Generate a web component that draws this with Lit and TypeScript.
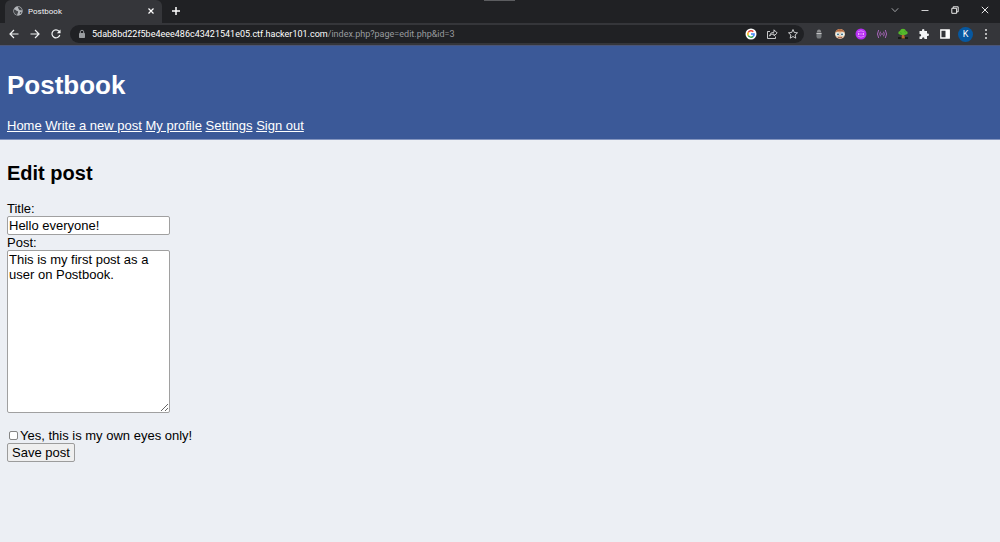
import { LitElement, html, css, svg } from 'lit';
import { customElement } from 'lit/decorators.js';

@customElement('browser-tabs')
class BrowserTabs extends LitElement {
  static styles = css`
    :host { display: block; background: #202124; }
    .strip { display: flex; height: 23px; position: relative; align-items: stretch; }
    .tab { display: flex; align-items: center; width: 157px; box-sizing: border-box; margin-left: 5px; padding: 0 7px 1px 8px; gap: 5px; background: #35363a; border-radius: 6px 6px 0 0; color: #f1f3f4; font: 8px Roboto, "Noto Sans", sans-serif; }
    .title { flex: 1; }
    button { border: 0; padding: 0; background: none; color: #fff; display: flex; align-items: center; justify-content: center; }
    .add { width: 28px; height: 22px; }
    .grip { position: absolute; left: 484px; top: 0; width: 31px; height: 1px; background: #5c5d60; }
    .windows { margin-left: auto; display: flex; }
    .windows button { width: 30px; height: 19px; }
    svg { display: block; fill: none; stroke: currentColor; }
  `;
  render() {
    return html`<div class="strip">
      <div class="tab">
        <svg width="10" height="10" viewBox="0 0 10 10"><circle cx="5" cy="5" r="4.7" fill="#b4b7bb" stroke="none"/><path d="M1.200 3.500C3 3.400 2.800 5 4.400 5c1 .2.9 1.400.3 2 0 .8-.4 1.500-.7 2C2 8.600.8 6.800.9 5zM5 1.500C4.800 2.500 6 2.600 6 3.500c.2 1 1.500.7 3 .8C8.700 2.500 7.300 1.100 5.500.8zM7 6.200l1.600-.4-.8 1.700-1 .6z" fill="#45474b" stroke="none"/></svg>
        <span class="title">Postbook</span>
        <button aria-label="Close tab"><svg width="8" height="8" viewBox="0 0 8 8"><path d="M1.500 1.500l5 5m0-5l-5 5" stroke-width="1.200"/></svg></button>
      </div>
      <button class="add" aria-label="New tab"><svg width="10" height="10" viewBox="0 0 10 10"><path d="M5 1v8M1 5h8" stroke-width="1.500"/></svg></button>
      <span class="grip"></span>
      <div class="windows">
        <button aria-label="Search tabs"><svg width="8" height="8" viewBox="0 0 8 8"><path d="M.8 2.300L4 5.700l3.200-3.400" stroke="#a0a2a5"/></svg></button>
        <button aria-label="Minimize"><svg width="8" height="8" viewBox="0 0 8 8"><path d="M.5 4.500h7" stroke-width=".8"/></svg></button>
        <button aria-label="Restore"><svg width="8" height="8" viewBox="0 0 8 8"><path d="M.8 2.300h4.800v5H.8zM2.200 2V.8h5v5H5.800" stroke-width=".9"/></svg></button>
        <button aria-label="Close"><svg width="8" height="8" viewBox="0 0 8 8"><path d="M.8.8l6.400 6.400m0-6.400L.8 7.200" stroke-width=".9"/></svg></button>
      </div>
    </div>`;
  }
}

const extensions = [
  { name: 'Agent', art: svg`<path d="M4 3.500Q4 1.500 6 1.500t2 2l.5 1h-5z" fill="#8b8c8e"/><path d="M3.500 5h5v4L7.500 10.500h-3L3.500 9z" fill="#777a7d"/><path d="M3.500 5.500h5" stroke="#c4c5c6"/>` },
  { name: 'Reader', art: svg`<circle cx="6" cy="6" r="5" fill="#e6c5a5"/><path d="M1.500 4Q3 .8 6 1t4.500 3L8 3.500H4z" fill="#b5693f"/><circle cx="3.600" cy="6.300" r="2" fill="#e5f2f5"/><circle cx="8.400" cy="6.300" r="2" fill="#e5f2f5"/><circle cx="4" cy="6.300" r=".9" fill="#26566b"/><circle cx="8" cy="6.300" r=".9" fill="#26566b"/><path d="M4 9.300q2 1 4 0" stroke="#a35b4a" fill="none"/>` },
  { name: 'Web tools', art: svg`<circle cx="6" cy="6" r="5.500" fill="#b52df2"/><path d="M2.500 4Q6 1.500 9.500 4M2.500 8Q6 10.500 9.500 8M3 6h6" fill="none" stroke="#ecacff" stroke-width=".7"/><path d="M3.500 5v2m5-2v2" stroke="#ecacff"/>` },
  { name: 'Broadcast', art: svg`<path d="M2.700 2Q.2 6 2.700 10M4.500 3.700Q3 6 4.500 8.300M9.300 2Q11.800 6 9.300 10M7.500 3.700Q9 6 7.500 8.300" fill="none" stroke="#a965bb" stroke-width="1"/><circle cx="6" cy="6" r=".8" fill="#bb75cb"/>` },
  { name: 'Tree', art: svg`<path d="M1 9h10v2H1z" fill="#171b17"/><path d="M5 6h2l1 4.500H4.500z" fill="#b56b30"/><path d="M1.300 5.500Q1 3.300 3 3q.5-2.200 3-2.200T9 3q2 .3 1.700 2.500Q9 7.500 6 6.700 3 7.500 1.300 5.500z" fill="#55b82b"/><path d="M3 4.500l2 1M7 3l2 1.500" stroke="#3d9826" stroke-width=".7"/>` },
  { name: 'Extensions', art: svg`<path d="M1.500 3H4q-.4-2 1.200-2T6.400 3H9v2.600q2-.4 2 1.200T9 8v3H6.500q.1-1.800-1.200-1.800T4 11H1.500V8.400q1.700 0 1.700-1.200T1.500 6z" fill="#f1f3f4"/>` },
  { name: 'Side panel', art: svg`<path d="M1.800 2h8.400v8H1.800z" fill="none" stroke="#fff" stroke-width="1.300"/><path d="M6.500 2h4v8h-4z" fill="#fff"/>` },
];

@customElement('browser-toolbar')
class BrowserToolbar extends LitElement {
  static styles = css`
    :host { display: block; background: #35363a; border-bottom: 1px solid #4a5578; }
    .bar { display: flex; align-items: center; height: 22px; color: #f1f3f4; }
    .bar button { display: flex; align-items: center; justify-content: center; border: 0; padding: 0; background: none; color: inherit; height: 18px; width: 21px; }
    .nav { display: flex; padding: 0 4px 0 3px; }
    .address { flex: 1; display: flex; align-items: center; min-width: 0; height: 18px; border-radius: 9px; background: #202124; padding: 0 1px 0 7px; }
    .url { flex: 1; min-width: 0; margin-left: 5px; color: #999c9f; white-space: nowrap; overflow: hidden; font: 9px/14px Roboto, "Noto Sans", sans-serif; }
    .host { color: #fff; }
    .ext { display: flex; padding-left: 4px; }
    .bar .person { width: 15px; height: 15px; margin: 0 3px; border-radius: 50%; background: #0758a0; color: #fff; font: 9px Roboto, sans-serif; }
    .bar .more { width: 15px; margin: 0 7px 0 2px; }
    svg { display: block; }
    .line { fill: none; stroke: currentColor; stroke-width: 1.2; }
    .thin { stroke-width: .8; }
  `;
  render() {
    return html`<div class="bar">
      <div class="nav">
        <button aria-label="Back"><svg class="line" width="12" height="12" viewBox="0 0 12 12"><path d="M10.500 6h-8M6 2L2 6l4 4"/></svg></button>
        <button aria-label="Forward"><svg class="line" width="12" height="12" viewBox="0 0 12 12"><path d="M1.500 6h8M6 2l4 4-4 4"/></svg></button>
        <button aria-label="Reload"><svg class="line" width="12" height="12" viewBox="0 0 12 12"><path d="M9.800 7A4 4 0 1 1 9 3.200L10 4.500"/><path d="M10.500 1.500v3.700H6.800z" fill="currentColor" stroke="none"/></svg></button>
      </div>
      <div class="address">
        <svg width="10" height="10" viewBox="0 0 10 10"><path d="M3.300 4V2.800q0-1.500 1.700-1.500t1.700 1.500V4" fill="none" stroke="#999c9f"/><rect x="2" y="4" width="6" height="5" rx=".7" fill="#999c9f"/></svg>
        <div class="url"><span class="host">5dab8bd22f5be4eee486c43421541e05.ctf.hacker101.com</span>/index.php?page=edit.php&amp;id=3</div>
        <button aria-label="Google"><svg width="12" height="12" viewBox="0 0 12 12"><circle cx="6" cy="6" r="5.500" fill="#fff"/><g fill="none" stroke-width="1.500"><path d="M3.200 4.500A3.200 3.200 0 0 1 8.300 3.700" stroke="#ea4335"/><path d="M3.200 4.500a3.200 3.200 0 0 0 0 3" stroke="#fbbc05"/><path d="M3.200 7.500a3.200 3.200 0 0 0 4.900.9" stroke="#34a853"/><path d="M8.100 8.400Q9.200 7.500 9.100 6H6" stroke="#4285f4"/></g></svg></button>
        <button aria-label="Share"><svg class="line thin" width="12" height="12" viewBox="0 0 12 12"><path d="M4 3.500H1.500v7h8V8.500M3.500 8Q4 4.200 8 4.200V1.800L11.200 5 8 7.800V6Q5 5.800 3.500 8z"/></svg></button>
        <button aria-label="Bookmark"><svg class="line thin" width="12" height="12" viewBox="0 0 12 12"><path d="M6 1.500l1.300 3 3.200.3L8.100 7l.7 3.200L6 8.500l-2.800 1.700L3.900 7 1.500 4.800l3.200-.3z"/></svg></button>
      </div>
      <div class="ext">${extensions.map(e => html`<button aria-label=${e.name}><svg width="12" height="12" viewBox="0 0 12 12">${e.art}</svg></button>`)}</div>
      <button class="person" aria-label="Profile">K</button>
      <button class="more" aria-label="Menu"><svg width="12" height="12" viewBox="0 0 12 12"><g fill="#e3e4e5"><circle cx="6" cy="2" r="1"/><circle cx="6" cy="6" r="1"/><circle cx="6" cy="10" r="1"/></g></svg></button>
    </div>`;
  }
}

@customElement('app-root')
class AppRoot extends LitElement {
  static styles = css`
    :host { display: flex; flex-direction: column; min-height: 100vh; background: #eceff4; color: #000; font: 13px/15px "Liberation Sans", Arial, sans-serif; }
    header { background: #3b5998; color: #fff; padding: 24px 7px 5px; border-bottom: 1px solid #8495bf; }
    h1 { margin: 0 0 18px; font-size: 26px; line-height: 30px; }
    nav { line-height: 16px; }
    nav a { color: #fff; }
    main { padding: 21px 7px; }
    h2 { margin: 0 0 16px; font-size: 20px; line-height: 24px; }
    form { display: flex; flex-direction: column; align-items: flex-start; }
    label { line-height: 15px; }
    input, textarea, button { font: inherit; color: #000; box-sizing: border-box; }
    .field { width: 163px; margin: 0; border: 1px solid #a0a0a0; border-radius: 2px; background: #fff; }
    .title { height: 19px; padding: 1px; }
    .post { height: 163px; padding: 1px; margin-bottom: 15px; display: block; }
    .private { display: flex; align-items: center; line-height: 15px; }
    .check { appearance: none; width: 9px; height: 9px; margin: 0 2px; border: 1px solid #858585; border-radius: 2px; background: #fff; }
    .check:checked { background: #3b5998; }
    .save { height: 19px; padding: 0 4px; border: 1px solid #9c9c9c; border-radius: 2px; background: #efefef; }
  `;
  render() {
    return html`<browser-tabs></browser-tabs><browser-toolbar></browser-toolbar>
      <header>
        <h1>Postbook</h1>
        <nav><a href="#home">Home</a> <a href="#new">Write a new post</a> <a href="#profile">My profile</a> <a href="#settings">Settings</a> <a href="#out">Sign out</a></nav>
      </header>
      <main>
        <h2>Edit post</h2>
        <form @submit=${(e: Event) => e.preventDefault()}>
          <label for="title">Title:</label>
          <input id="title" class="field title" type="text" value="Hello everyone!">
          <label for="post">Post:</label>
          <textarea id="post" class="field post" .value=${'This is my first post as a user on Postbook.'}></textarea>
          <label class="private"><input class="check" type="checkbox">Yes, this is my own eyes only!</label>
          <button class="save">Save post</button>
        </form>
      </main>`;
  }
}
